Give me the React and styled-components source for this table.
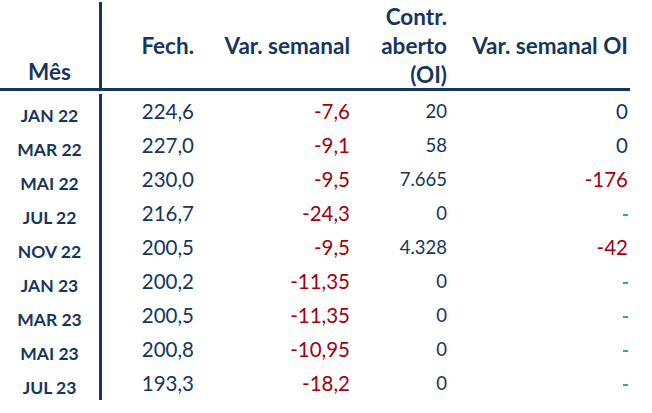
import React from 'react'
import styled, { createGlobalStyle } from 'styled-components'

const GlobalStyle = createGlobalStyle`
  html, body {
    margin: 0;
    padding: 0;
    background: #fff;
  }
  body {
    font-family: Lato, "Open Sans", sans-serif;
    color: #17365d;
  }
`

const NAVY = '#17365d'
const RED = '#a2000f'
const GREEN = '#2db36f'

const Page = styled.div`
  padding-top: 2px;
  width: 652px;
  height: 413px;
  box-sizing: border-box;
`

const Grid = styled.div`
  display: grid;
  grid-template-columns: 102px 98px 156px 96px 178px;
  grid-template-rows: 92px;
  grid-auto-rows: 34px;
  width: 630px;
`

const HeadCell = styled.div`
  height: 89px;
  border-bottom: 3px solid ${NAVY};
  border-right: ${p => (p.$first ? `3px solid ${NAVY}` : 'none')};
  display: flex;
  flex-direction: column;
  justify-content: ${p => (p.$bottom ? 'flex-end' : 'center')};
  align-items: ${p => (p.$first ? 'center' : 'flex-end')};
  padding-right: ${p => p.$pr || 0}px;
  padding-bottom: ${p => (p.$bottom ? 2 : 0)}px;
  box-sizing: border-box;
  font-weight: 700;
  font-size: 22.5px;
  line-height: 29px;
  color: ${NAVY};
  white-space: nowrap;
`

const MonthCell = styled.div`
  border-right: 3px solid ${NAVY};
  display: flex;
  align-items: center;
  justify-content: center;
  padding-top: 8px;
  box-sizing: border-box;
  font-weight: 700;
  font-size: 17.5px;
  color: ${NAVY};
`

const NumCell = styled.div`
  display: flex;
  align-items: center;
  justify-content: flex-end;
  padding-right: ${p => p.$pr}px;
  font-size: ${p => (p.$small ? 18.5 : 20.5)}px;
  color: ${p => p.$tone || NAVY};
  white-space: nowrap;
`

const Dash = styled.span`
  display: inline-block;
  width: 5px;
  height: 2px;
  background: ${GREEN};
  margin-top: 4px;
`

const rows = [
  ['JAN 22', '224,6', '-7,6', '20', '0'],
  ['MAR 22', '227,0', '-9,1', '58', '0'],
  ['MAI 22', '230,0', '-9,5', '7.665', '-176'],
  ['JUL 22', '216,7', '-24,3', '0', '-'],
  ['NOV 22', '200,5', '-9,5', '4.328', '-42'],
  ['JAN 23', '200,2', '-11,35', '0', '-'],
  ['MAR 23', '200,5', '-11,35', '0', '-'],
  ['MAI 23', '200,8', '-10,95', '0', '-'],
  ['JUL 23', '193,3', '-18,2', '0', '-'],
]

const oiTone = v => (v.startsWith('-') ? RED : NAVY)

export default function App() {
  return (
    <>
      <GlobalStyle />
      <Page>
        <Grid>
          <HeadCell $first $bottom>Mês</HeadCell>
          <HeadCell $pr={6}>Fech.</HeadCell>
          <HeadCell $pr={6}>Var. semanal</HeadCell>
          <HeadCell $pr={5}>
            <span>Contr.</span>
            <span>aberto</span>
            <span>(OI)</span>
          </HeadCell>
          <HeadCell $pr={2}>Var. semanal OI</HeadCell>

          {rows.map(([mes, fech, varSem, oi, varOi]) => (
            <React.Fragment key={mes}>
              <MonthCell>{mes}</MonthCell>
              <NumCell $pr={6}>{fech}</NumCell>
              <NumCell $pr={6} $tone={RED}>{varSem}</NumCell>
              <NumCell $pr={5} $small>{oi}</NumCell>
              <NumCell $pr={2} $tone={oiTone(varOi)}>
                {varOi === '-' ? <Dash /> : varOi}
              </NumCell>
            </React.Fragment>
          ))}
        </Grid>
      </Page>
    </>
  )
}
